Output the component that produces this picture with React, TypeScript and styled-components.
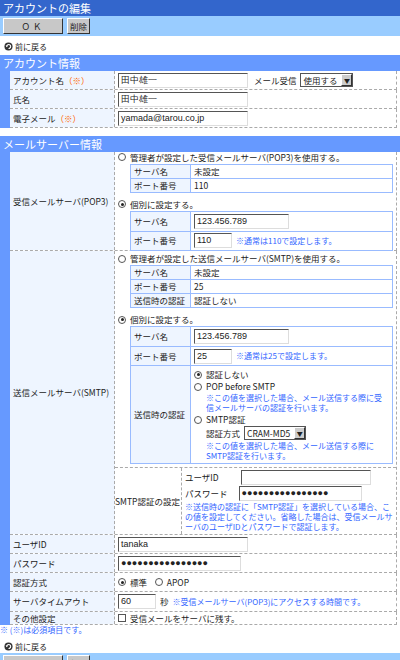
import React from "react";
import styled, { createGlobalStyle } from "styled-components";

const G = createGlobalStyle`
  body { margin:0; background:#fff; font-family:"Noto Sans CJK JP","Liberation Sans",sans-serif; font-size:8.5px; line-height:11px; color:#222; }
  * { box-sizing:border-box; }
`;
const Page = styled.div`width:400px;height:660px;overflow:hidden;display:flex;flex-direction:column;`;
const TitleBar = styled.div`height:16px;flex:none;background:#3366cc;color:#fff;font-size:11px;line-height:16px;padding-left:3px;`;
const BtnBar = styled.div`height:20px;flex:none;background:#99ccff;display:flex;align-items:center;gap:4px;padding-left:3px;`;
const Btn = styled.button<{ $w: number }>`
  width:${p => p.$w}px;height:16px;padding:0;background:#c8c8c8;font-size:8.5px;font-family:inherit;
  border:1px solid;border-color:#fff #333 #333 #fff;color:#222;letter-spacing:${p => (p.$w > 40 ? "3px" : "0")};
`;
const Back = styled.div`height:14px;flex:none;display:flex;align-items:center;gap:2px;padding-left:4px;font-size:8px;margin:3px 0 0;`;
const BackIcon = () => (
  <svg width="9" height="9" viewBox="0 0 10 10"><circle cx="5" cy="5" r="4.5" fill="#333" /><path d="M3 5 A2.2 2.2 0 1 1 5 7.2" stroke="#fff" strokeWidth="1.2" fill="none" /><path d="M1.8 4 L3 5.8 L4.4 4.2Z" fill="#fff" /></svg>
);
const SecHead = styled.div`height:16px;flex:none;background:#6699ff;color:#fff;font-size:11px;line-height:16px;padding-left:3px;`;
const Sec = styled.div`border-left:10px solid #6699ff;margin-right:3px;flex:none;`;
const Row = styled.div<{ $h?: number }>`display:flex;border-bottom:1px dashed #aaa;border-right:1px dashed #aaa;${p => (p.$h ? `height:${p.$h}px;` : "")}`;
const Label = styled.div<{ $w?: number }>`width:${p => p.$w ?? 105}px;flex:none;background:#eef5ff;padding-left:3px;display:flex;align-items:center;border-right:1px dashed #aaa;white-space:nowrap;`;
const Value = styled.div`flex:1;padding:2px 3px;display:flex;flex-direction:column;justify-content:center;gap:1px;min-width:0;`;
const Line = styled.div`display:flex;align-items:center;gap:4px;white-space:nowrap;`;
const Req = styled.span`color:#ff6600;`;
const Input = styled.div<{ $w: number }>`width:${p => p.$w}px;height:15px;border:1px solid;border-color:#555 #ddd #ddd #555;background:#fff;font-size:9px;line-height:13px;padding-left:2px;font-family:"Liberation Sans",sans-serif;`;
const Select = styled.div`height:14px;border:1px solid #555;display:flex;align-items:center;background:#fff;padding-left:2px;gap:4px;`;
const Arrow = styled.span`width:11px;height:12px;background:#ccc;border:1px solid;border-color:#fff #333 #333 #fff;display:flex;align-items:center;justify-content:center;font-size:6px;`;
const Radio = styled.span<{ $on?: boolean }>`
  width:8px;height:8px;border-radius:50%;border:1px solid #555;background:#fff;display:inline-flex;align-items:center;justify-content:center;flex:none;
  &::after{content:"";width:3px;height:3px;border-radius:50%;background:${p => (p.$on ? "#222" : "transparent")};}
`;
const Check = styled.span`width:8px;height:8px;border:1px solid #555;background:#fff;display:inline-block;`;
const Note = styled.div`color:#3366ff;font-size:8px;line-height:10px;`;
const Inner = styled.div`margin-left:12px;border:1px solid #99bbff;`;
const IRow = styled.div<{ $h?: number }>`display:flex;${p => (p.$h ? `min-height:${p.$h}px;` : "")}& + &{border-top:1px solid #99bbff;}`;
const ILabel = styled.div<{ $w?: number }>`width:${p => p.$w ?? 60}px;flex:none;background:#eef5ff;border-right:1px solid #99bbff;padding-left:3px;display:flex;align-items:center;white-space:nowrap;`;
const IValue = styled.div`flex:1;padding:1px 3px;display:flex;flex-direction:column;justify-content:center;gap:1px;`;
const Spacer = styled.div`flex:1;min-height:0;`;
const Footer = styled.div`height:13px;flex:none;background:#3366cc;`;

export default function App() {
  return (
    <Page>
      <G />
      <TitleBar>アカウントの編集</TitleBar>
      <BtnBar><Btn $w={60}>ＯＫ</Btn><Btn $w={23}>削除</Btn></BtnBar>
      <Back style={{ margin: "3px 0 2px" }}><BackIcon />前に戻る</Back>
      <SecHead>アカウント情報</SecHead>
      <Sec>
        <Row $h={19}><Label>アカウント名<Req>（※）</Req></Label><Value><Line><Input $w={130}>田中雄一</Input>&nbsp;メール受信<Select>使用する<Arrow>▼</Arrow></Select></Line></Value></Row>
        <Row $h={19}><Label>氏名</Label><Value><Input $w={130}>田中雄一</Input></Value></Row>
        <Row $h={19}><Label>電子メール<Req>（※）</Req></Label><Value><Input $w={130}>yamada@tarou.co.jp</Input></Value></Row>
      </Sec>
      <div style={{ height: 8, flex: "none" }} />
      <SecHead>メールサーバー情報</SecHead>
      <Sec>
        <Row $h={99}><Label>受信メールサーバ(POP3)</Label><Value>
          <Line><Radio />管理者が設定した受信メールサーバ(POP3)を使用する。</Line>
          <Inner>
            <IRow $h={13}><ILabel>サーバ名</ILabel><IValue>未設定</IValue></IRow>
            <IRow $h={13}><ILabel>ポート番号</ILabel><IValue>110</IValue></IRow>
          </Inner>
          <Line style={{ marginTop: 5 }}><Radio $on />個別に設定する。</Line>
          <Inner>
            <IRow $h={19}><ILabel>サーバ名</ILabel><IValue><Input $w={95}>123.456.789</Input></IValue></IRow>
            <IRow $h={19}><ILabel>ポート番号</ILabel><IValue><Line><Input $w={38}>110</Input><Note>※通常は110で設定します。</Note></Line></IValue></IRow>
          </Inner>
        </Value></Row>
        <Row>
          <Label>送信メールサーバ(SMTP)</Label>
          <div style={{ flex: 1, display: "flex", flexDirection: "column" }}>
            <Value style={{ borderBottom: "1px dashed #aaa", padding: "2px 3px 3px" }}>
              <Line><Radio />管理者が設定した送信メールサーバ(SMTP)を使用する。</Line>
              <Inner>
                <IRow $h={13}><ILabel>サーバ名</ILabel><IValue>未設定</IValue></IRow>
                <IRow $h={13}><ILabel>ポート番号</ILabel><IValue>25</IValue></IRow>
                <IRow $h={13}><ILabel>送信時の認証</ILabel><IValue>認証しない</IValue></IRow>
              </Inner>
              <Line style={{ marginTop: 5 }}><Radio $on />個別に設定する。</Line>
              <Inner>
                <IRow $h={19}><ILabel>サーバ名</ILabel><IValue><Input $w={95}>123.456.789</Input></IValue></IRow>
                <IRow $h={19}><ILabel>ポート番号</ILabel><IValue><Line><Input $w={38}>25</Input><Note>※通常は25で設定します。</Note></Line></IValue></IRow>
                <IRow><ILabel>送信時の認証</ILabel><IValue style={{ padding: "3px 3px 2px" }}>
                  <Line><Radio $on />認証しない</Line>
                  <Line><Radio />POP before SMTP</Line>
                  <Note style={{ paddingLeft: 12 }}>※この値を選択した場合、メール送信する際に受信メールサーバの認証を行います。</Note>
                  <Line><Radio />SMTP認証</Line>
                  <Line style={{ paddingLeft: 12 }}>認証方式<Select>CRAM-MD5<Arrow>▼</Arrow></Select></Line>
                  <Note style={{ paddingLeft: 12 }}>※この値を選択した場合、メール送信する際にSMTP認証を行います。</Note>
                </IValue></IRow>
              </Inner>
            </Value>
            <div style={{ display: "flex" }}>
              <Label $w={67} style={{ background: "#fff", padding: 0 }}>SMTP認証の設定</Label>
              <Value>
                <Line>ユーザID<span style={{ width: 14 }} /><Input $w={130}> </Input></Line>
                <Line>パスワード<span style={{ width: 3 }} /><Input $w={123}>●●●●●●●●●●●●●●●●</Input></Line>
                <Note>※送信時の認証に「SMTP認証」を選択している場合、この値を設定してください。省略した場合は、受信メールサーバのユーザIDとパスワードで認証します。</Note>
              </Value>
            </div>
          </div>
        </Row>
        <Row $h={19}><Label>ユーザID</Label><Value><Input $w={130}>tanaka</Input></Value></Row>
        <Row $h={19}><Label>パスワード</Label><Value><Input $w={123}>●●●●●●●●●●●●●●●●</Input></Value></Row>
        <Row $h={19}><Label>認証方式</Label><Value><Line><Radio $on />標準&nbsp;&nbsp;<Radio />APOP</Line></Value></Row>
        <Row $h={20}><Label>サーバタイムアウト</Label><Value><Line><Input $w={38}>60</Input>秒<Note>※受信メールサーバ(POP3)にアクセスする時間です。</Note></Line></Value></Row>
        <Row $h={13}><Label>その他設定</Label><Value><Line><Check />受信メールをサーバに残す。</Line></Value></Row>
      </Sec>
      <Note style={{ height: 11, flex: "none" }}>※ (※)は必須項目です。</Note>
      <Back><BackIcon />前に戻る</Back>
      <Spacer />
      <BtnBar><Btn $w={60}>ＯＫ</Btn><Btn $w={23}>削除</Btn></BtnBar>
      <Footer />
    </Page>
  );
}
